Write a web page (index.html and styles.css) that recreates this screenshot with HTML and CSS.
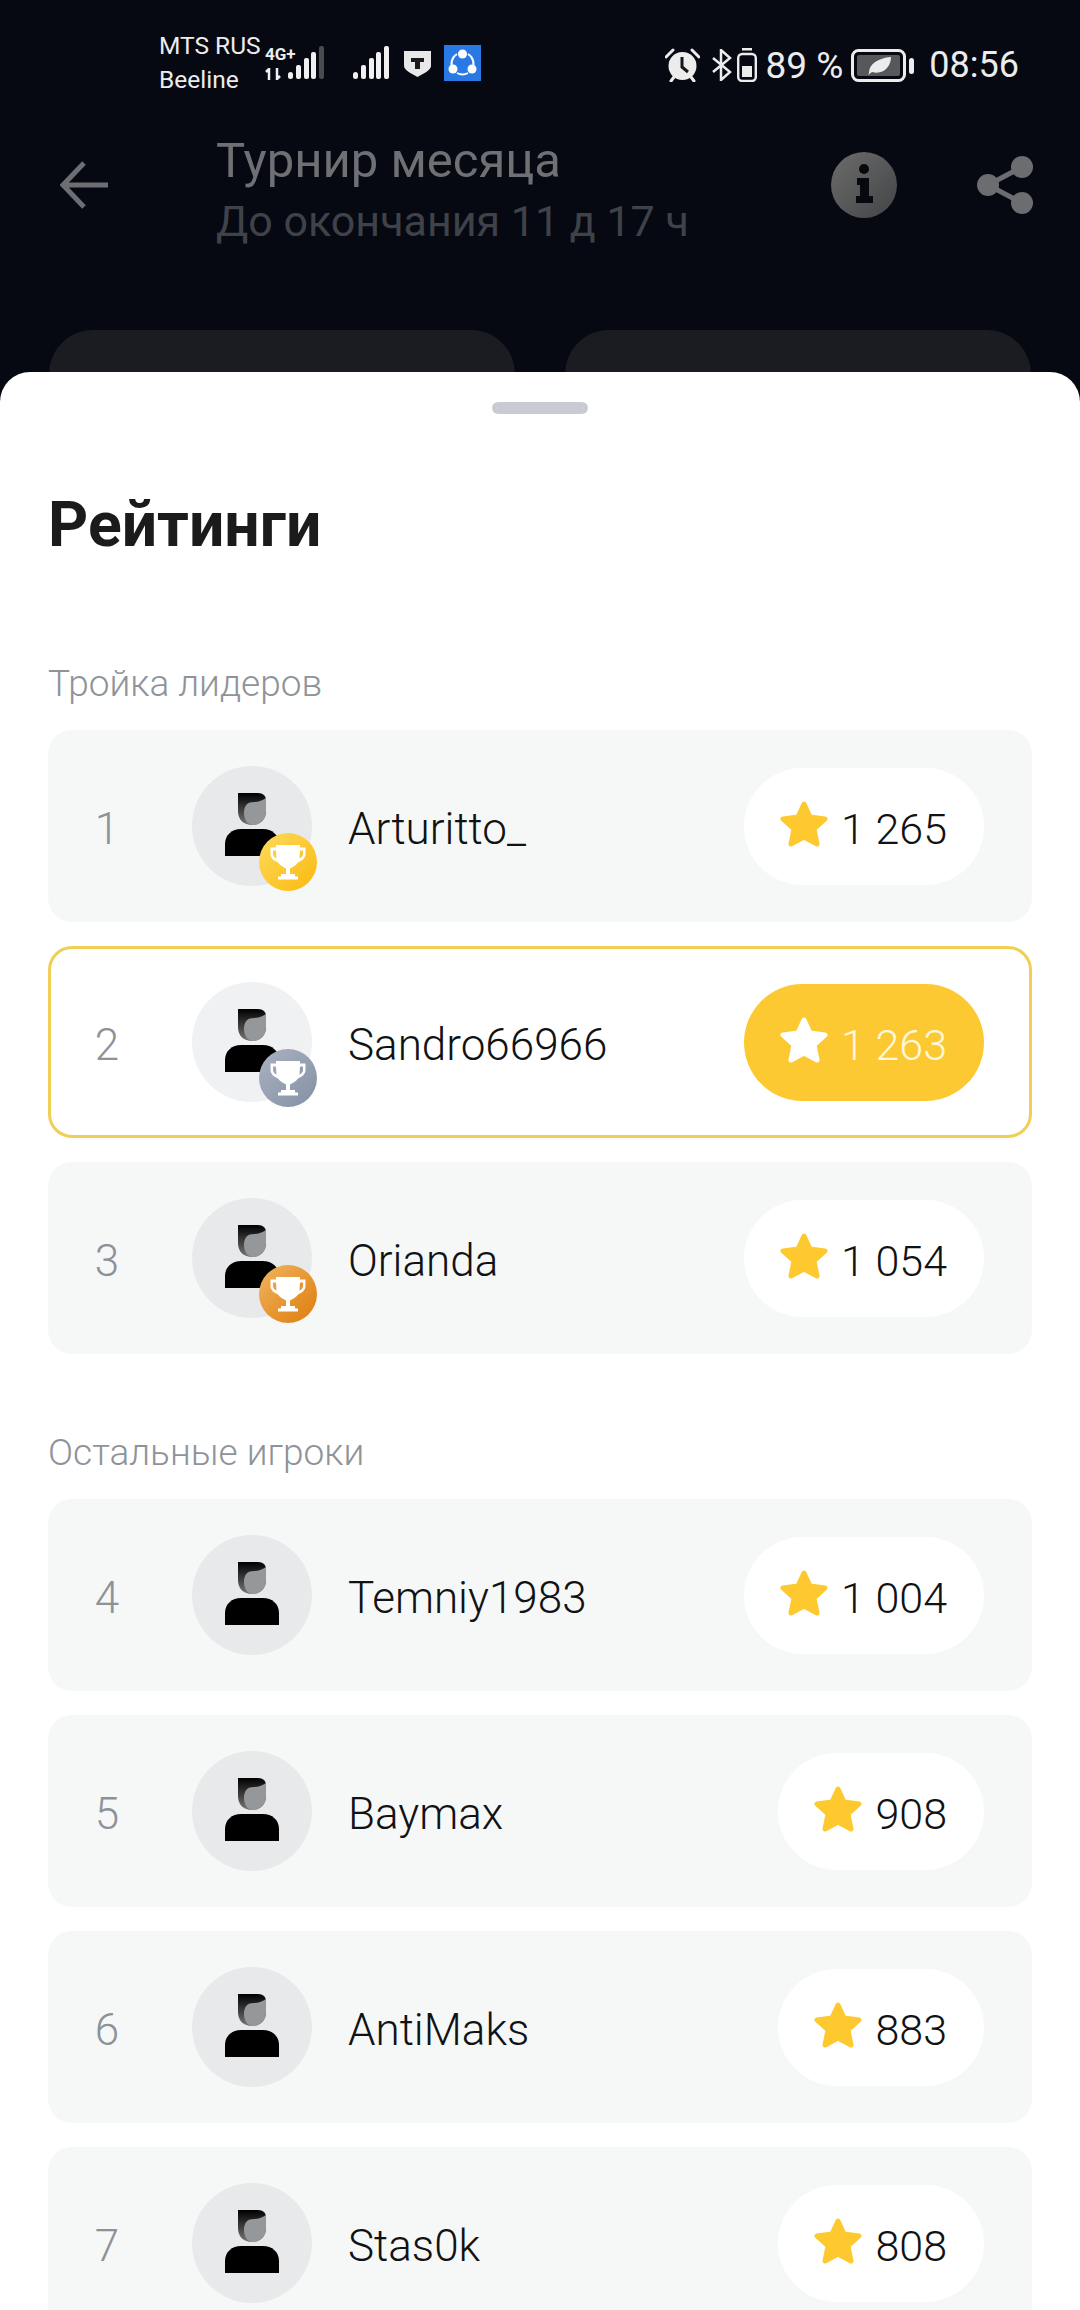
FILE: index.html
```html
<!DOCTYPE html>
<html>
  <head>
    <meta charset="utf-8">
    <link rel="stylesheet" href="styles.css">
  </head>
  <body>
    <svg class="sprite" width="0" height="0">
      <defs>
        <linearGradient id="hair" x1="0" y1="0" x2="0" y2="1">
          <stop offset="0" stop-color="#000"/>
          <stop offset="1" stop-color="#777"/>
        </linearGradient>
        <linearGradient id="info" x1="0" y1="0" x2="1" y2="1">
          <stop offset="0" stop-color="#6c6c6c"/>
          <stop offset="1" stop-color="#434446"/>
        </linearGradient>
      </defs>
      <symbol id="person" viewBox="0 0 56 64">
        <path fill="url(#hair)" d="M14 0H34C39 0 42 3 42 7V18C42 27 36 32 28 32C20 32 14 27 14 18Z"/>
        <path fill="#95989b" d="M20 20C20 12 24 9 30 9C35 9 39 7 42 5V18C42 27 36 32 29 32C24 32 20 27 20 20Z"/>
        <path fill="#000" d="M1 63V51C1 42 8 36 17 36H39C48 36 55 42 55 51V63Z"/>
      </symbol>
      <symbol id="star" viewBox="0 0 48 46">
        <path fill="currentColor" stroke="currentColor" stroke-width="5" stroke-linejoin="round" d="M24 3L30 16L45 18L34 28L37 43L24 36L11 43L14 28L3 18L18 16Z"/>
      </symbol>
      <symbol id="trophy" viewBox="0 0 36 36">
        <path fill="#fff" d="M6 1H30V3.500H35.500V10C35.500 14 32 17 28 18.500C26 21.500 23 23 20 24.500V30H25V32.500H28V35.500H8V32.500H11V30H16V24.500C13 23 10 21.500 8 18.500C4 17 .5 14 .5 10V3.500H6ZM6 6.500H3V10C3 12 4.500 13.500 6.500 14.500ZM30 6.500L29.500 14.500C31.500 13.500 33 12 33 10V6.500Z"/>
      </symbol>
    </svg>

    <div class="statusbar">
      <div class="status-left">
        <div class="carriers"><span>MTS RUS</span><span>Beeline</span></div>
        <div class="net">
          <span class="net-type">4G+</span>
          <svg class="net-arrows" width="18" height="12" viewBox="0 0 18 12">
            <path d="M4 12V1L1 4M12 0V11L15 8" fill="none" stroke="#f0f0f0" stroke-width="2.500"/>
          </svg>
        </div>
        <svg class="signal" width="36" height="34" viewBox="0 0 36 34">
          <g fill="#f0f0f0">
            <rect x="0" y="26" width="5" height="7" rx="2.500"/>
            <rect x="8" y="19" width="5" height="14" rx="2"/>
            <rect x="16" y="12" width="5" height="21" rx="2"/>
            <rect x="23" y="6" width="5" height="27" rx="2"/>
          </g>
          <rect x="31" y="0" width="5" height="33" rx="2" fill="#4a4b4e"/>
        </svg>
        <svg class="signal signal-second" width="36" height="34" viewBox="0 0 36 34">
          <g fill="#f0f0f0">
            <rect x="0" y="26" width="5" height="7" rx="2.500"/>
            <rect x="8" y="19" width="5" height="14" rx="2"/>
            <rect x="16" y="12" width="5" height="21" rx="2"/>
            <rect x="23" y="6" width="5" height="27" rx="2"/>
            <rect x="31" y="0" width="5" height="33" rx="2"/>
          </g>
        </svg>
        <svg class="shield" width="27" height="27" viewBox="0 0 27 27">
          <path fill="#e8e8e8" d="M0 1H27V16C27 20 19 24 13.500 27C8 24 0 20 0 16Z"/>
          <path fill="#1a1a1c" d="M7 8H20V12H16V19H11V12H7Z"/>
        </svg>
        <svg class="share-app" width="37" height="36" viewBox="0 0 37 36">
          <rect width="37" height="36" fill="#2a78e4"/>
          <path d="M9 24A11 11 0 0 1 13 9M24 9A11 11 0 0 1 28 24M13 28A11 11 0 0 0 24 28" fill="none" stroke="#fff" stroke-width="2"/>
          <circle cx="18.500" cy="9" r="4.500" fill="#fff"/>
          <circle cx="9" cy="24" r="4.500" fill="#fff"/>
          <circle cx="28" cy="24" r="4.500" fill="#fff"/>
        </svg>
      </div>
      <div class="status-right">
        <svg width="35" height="34" viewBox="0 0 35 34">
          <circle cx="17.500" cy="18" r="14" fill="#ececec"/>
          <path d="M17 9V19L23 24" fill="none" stroke="#14161c" stroke-width="3"/>
          <path d="M1 9L8 2M34 9L27 2M6 33L9 29M29 33L26 29" stroke="#ececec" stroke-width="3" stroke-linecap="round"/>
        </svg>
        <svg class="bt" width="20" height="32" viewBox="0 0 20 32">
          <path d="M1 9L18 23L9 31V1L18 9L1 23" fill="none" stroke="#ececec" stroke-width="2.500"/>
        </svg>
        <svg class="small-battery" width="20" height="34" viewBox="0 0 20 34">
          <rect x="5" y="0" width="10" height="2.500" fill="#ececec"/>
          <rect x="1.200" y="6" width="17.600" height="27" rx="4" fill="none" stroke="#ececec" stroke-width="2.400"/>
          <rect x="5" y="18" width="10" height="11" fill="#ececec"/>
        </svg>
        <span class="percent">89 %</span>
        <svg class="battery" width="63" height="33" viewBox="0 0 63 33">
          <rect x="1.500" y="1.500" width="52" height="30" rx="6" fill="none" stroke="#ececec" stroke-width="3"/>
          <rect x="6" y="6" width="43" height="21" rx="2" fill="#56585c"/>
          <path fill="#ececec" d="M18 24C18 15 27 9 40 8C40 18 32 26 21 23L17 26Z"/>
          <rect x="58" y="9" width="5" height="16" rx="2.500" fill="#ececec"/>
        </svg>
        <span class="clock">08:56</span>
      </div>
    </div>

    <div class="appbar">
      <svg class="back" width="48" height="48" viewBox="0 0 48 48">
        <path d="M48 24H4M24 2L3 24L24 46" fill="none" stroke="#6d6e71" stroke-width="5"/>
      </svg>
      <div class="titles">
        <div class="title">Турнир месяца</div>
        <div class="subtitle">До окончания 11 д 17 ч</div>
      </div>
      <svg class="info" width="66" height="66" viewBox="0 0 66 66">
        <circle cx="33" cy="33" r="33" fill="url(#info)"/>
        <circle cx="33" cy="17" r="5" fill="#08090f"/>
        <path fill="#08090f" d="M26 26H38V44H42V51H25V44H29V33H26Z"/>
      </svg>
      <svg class="share" width="58" height="60" viewBox="0 0 58 60">
        <path d="M46 12L12 30L46 48" fill="none" stroke="#6b6d70" stroke-width="5"/>
        <circle cx="46" cy="12" r="11" fill="#6b6d70"/>
        <circle cx="12" cy="30" r="11" fill="#6b6d70"/>
        <circle cx="46" cy="48" r="11" fill="#6b6d70"/>
      </svg>
    </div>

    <div class="tiles">
      <div class="tile"></div>
      <div class="tile"></div>
    </div>

    <div class="sheet">
      <div class="handle"></div>
      <h1 class="sheet-title">Рейтинги</h1>

      <div class="section-label">Тройка лидеров</div>
      <div class="rows">
        <div class="row">
          <span class="rank">1</span>
          <div class="avatar">
            <svg class="person"><use href="#person"/></svg>
            <div class="badge badge-gold"><svg class="cup"><use href="#trophy"/></svg></div>
          </div>
          <span class="name">Arturitto_</span>
          <div class="pill"><svg class="star"><use href="#star"/></svg><span>1 265</span></div>
        </div>
        <div class="row row-me">
          <span class="rank">2</span>
          <div class="avatar">
            <svg class="person"><use href="#person"/></svg>
            <div class="badge badge-silver"><svg class="cup"><use href="#trophy"/></svg></div>
          </div>
          <span class="name">Sandro66966</span>
          <div class="pill"><svg class="star"><use href="#star"/></svg><span>1 263</span></div>
        </div>
        <div class="row">
          <span class="rank">3</span>
          <div class="avatar">
            <svg class="person"><use href="#person"/></svg>
            <div class="badge badge-bronze"><svg class="cup"><use href="#trophy"/></svg></div>
          </div>
          <span class="name">Orianda</span>
          <div class="pill"><svg class="star"><use href="#star"/></svg><span>1 054</span></div>
        </div>
      </div>

      <div class="section-label section-label-next">Остальные игроки</div>
      <div class="rows">
        <div class="row">
          <span class="rank">4</span>
          <div class="avatar"><svg class="person"><use href="#person"/></svg></div>
          <span class="name">Temniy1983</span>
          <div class="pill"><svg class="star"><use href="#star"/></svg><span>1 004</span></div>
        </div>
        <div class="row">
          <span class="rank">5</span>
          <div class="avatar"><svg class="person"><use href="#person"/></svg></div>
          <span class="name">Baymax</span>
          <div class="pill"><svg class="star"><use href="#star"/></svg><span>908</span></div>
        </div>
        <div class="row">
          <span class="rank">6</span>
          <div class="avatar"><svg class="person"><use href="#person"/></svg></div>
          <span class="name">AntiMaks</span>
          <div class="pill"><svg class="star"><use href="#star"/></svg><span>883</span></div>
        </div>
        <div class="row">
          <span class="rank">7</span>
          <div class="avatar"><svg class="person"><use href="#person"/></svg></div>
          <span class="name">Stas0k</span>
          <div class="pill"><svg class="star"><use href="#star"/></svg><span>808</span></div>
        </div>
      </div>
    </div>
  </body>
</html>
```

FILE: styles.css
```css
html,
body {
  margin: 0;
  padding: 0;
}

body {
  position: relative;
  width: 1080px;
  height: 2310px;
  overflow: hidden;
  background: #060912;
  font-family: Roboto, "Noto Sans", sans-serif;
}

svg {
  display: block;
  flex: none;
}

.sprite {
  position: absolute;
}

/* status bar */

.statusbar {
  height: 110px;
  box-sizing: border-box;
  padding: 36px 61px 0 159px;
  display: flex;
  justify-content: space-between;
  align-items: flex-start;
  color: #ececec;
}

.status-left,
.status-right {
  display: flex;
  align-items: center;
  height: 54px;
}

.status-right {
  margin-top: 2px;
}

.carriers {
  display: flex;
  flex-direction: column;
  width: 106px;
  font-size: 24.500px;
  line-height: 34px;
  white-space: nowrap;
}

.net {
  width: 23px;
  align-self: stretch;
  display: flex;
  flex-direction: column;
  justify-content: center;
  gap: 7px;
  white-space: nowrap;
}

.net-type {
  font-size: 17px;
  line-height: 14px;
  font-weight: 700;
}

.signal-second {
  margin-left: 29px;
}

.shield {
  margin-left: 15px;
}

.share-app {
  margin-left: 13px;
}

.status-right .bt {
  margin-left: 12px;
}

.small-battery {
  margin-left: 5px;
}

.percent {
  margin-left: 8px;
  font-size: 37px;
  white-space: nowrap;
}

.battery {
  margin-left: 8px;
}

.clock {
  margin-left: 15px;
  font-size: 36px;
}

/* app bar behind the sheet */

.appbar {
  height: 110px;
  padding-left: 60px;
  padding-right: 46px;
  display: flex;
  align-items: center;
  margin-top: 20px;
}

.titles {
  margin-left: 108px;
  flex: 1;
  margin-top: 6px;
}

.title {
  font-size: 49px;
  line-height: 60px;
  color: #6f7074;
}

.subtitle {
  margin-top: 5px;
  font-size: 43px;
  line-height: 50px;
  color: #3f4248;
}

.share {
  margin-left: 79px;
}

.tiles {
  margin-top: 90px;
  padding: 0 49px;
  display: flex;
  gap: 50px;
}

.tile {
  flex: 1;
  height: 120px;
  background: #1a1c21;
  border-radius: 44px 44px 0 0;
}

/* rating sheet, lies over the page */

.sheet {
  position: absolute;
  top: 372px;
  left: 0;
  right: 0;
  bottom: 0;
  padding: 30px 48px 0;
  background: #fff;
  border-radius: 30px 30px 0 0;
  overflow: hidden;
}

.handle {
  width: 96px;
  height: 12px;
  margin: 0 auto;
  border-radius: 6px;
  background: #c8cbd2;
}

.sheet-title {
  margin: 73px 0 0;
  font-size: 62.500px;
  line-height: 76px;
  font-weight: 700;
  color: #1b1b1b;
}

.section-label {
  margin-top: 98px;
  font-size: 37px;
  line-height: 46px;
  font-weight: 300;
  color: #8f9399;
}

.section-label-next {
  margin-top: 76px;
}

.rows {
  margin-top: 23px;
  display: flex;
  flex-direction: column;
  gap: 24px;
}

.row {
  height: 192px;
  box-sizing: border-box;
  display: flex;
  align-items: center;
  padding: 0 48px 0 0;
  background: #f6f8f8;
  border-radius: 24px;
}

.row-me {
  background: #fff;
  border: 3px solid #f0cf55;
  padding-right: 45px;
}

.rank {
  width: 118px;
  text-align: center;
  font-size: 44px;
  font-weight: 300;
  line-height: 52px;
  padding-top: 6px;
  color: #8d9298;
  margin-right: 26px;
}

.row-me .rank {
  margin-left: -3px;
}

.avatar {
  position: relative;
  width: 120px;
  height: 120px;
  border-radius: 50%;
  background: #e8e9eb;
  display: flex;
  justify-content: center;
}

.row-me .avatar {
  background: #f0f1f3;
}

.person {
  width: 56px;
  height: 64px;
  margin-top: 27px;
}

.badge {
  position: absolute;
  left: 67px;
  top: 67px;
  width: 58px;
  height: 58px;
  border-radius: 50%;
  display: flex;
  align-items: center;
  justify-content: center;
}

.badge-gold {
  background: linear-gradient(135deg, #fddb5c, #fbb90f);
}

.badge-silver {
  background: linear-gradient(135deg, #a9b2c1, #8490a4);
}

.badge-bronze {
  background: linear-gradient(135deg, #f2b45f, #dd7c0c);
}

.cup {
  width: 36px;
  height: 36px;
}

.name {
  flex: 1;
  margin-left: 36px;
  font-size: 44px;
  font-weight: 300;
  line-height: 52px;
  padding-top: 6px;
  color: #111214;
}

.pill {
  height: 117px;
  padding: 0 37px 0 36px;
  display: flex;
  align-items: center;
  gap: 13px;
  background: #fff;
  border-radius: 59px;
  font-size: 43px;
  font-weight: 300;
  color: #111214;
}

.pill span {
  padding-top: 6px;
}

.star {
  width: 48px;
  height: 46px;
  margin-top: -4px;
  color: #fdc92f;
}

.row-me .pill {
  background: #fdc933;
  color: #fff8dc;
}

.row-me .star {
  color: #fff;
}
```
